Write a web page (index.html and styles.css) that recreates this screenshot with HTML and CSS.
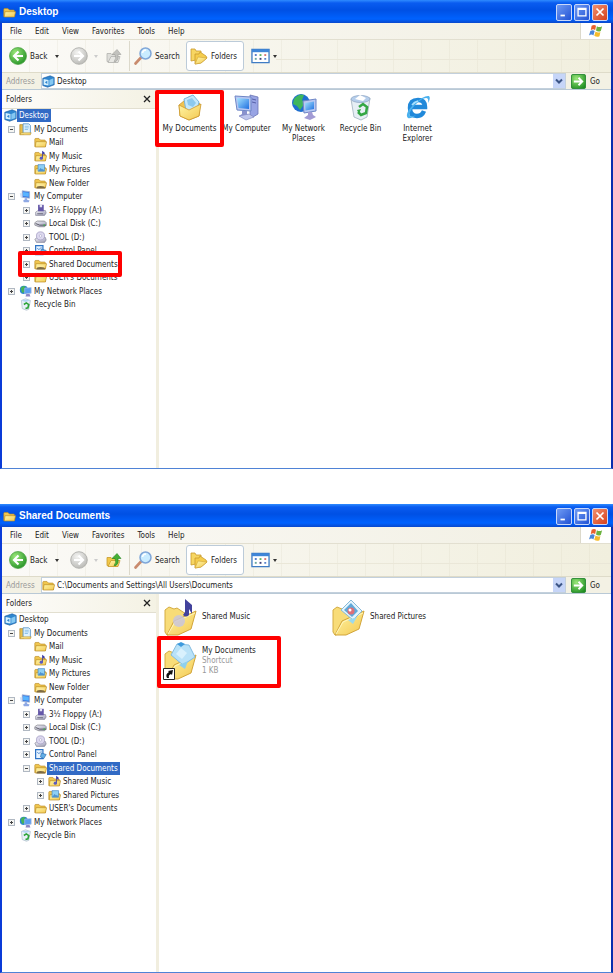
FILE: index.html
```html
<!DOCTYPE html>
<html lang="en">
<head>
    <meta charset="UTF-8">
    <meta name="viewport" content="width=device-width, initial-scale=1.0">
    <title>Shared Documents</title>
    <link rel="stylesheet" href="styles.css">
</head>
<body>
    <!-- Icon set -->
    <svg class="sprite" aria-hidden="true">
        <defs>
            <linearGradient id="gold" x1="0" y1="0" x2="1" y2="1">
                <stop offset="0" stop-color="#fff5a6"/><stop offset="1" stop-color="#f3c850"/>
            </linearGradient>
            <linearGradient id="sky" x1="0" y1="0" x2="1" y2="1">
                <stop offset="0" stop-color="#a6e4ff"/><stop offset="1" stop-color="#1f6fe0"/>
            </linearGradient>
            <linearGradient id="silver" x1="0" y1="0" x2="1" y2="1">
                <stop offset="0" stop-color="#f4f4f8"/><stop offset="1" stop-color="#9a9ab4"/>
            </linearGradient>
            <radialGradient id="leaf" cx=".35" cy=".3" r=".8">
                <stop offset="0" stop-color="#9be77a"/><stop offset="1" stop-color="#1f8f22"/>
            </radialGradient>
            <radialGradient id="mist" cx=".4" cy=".3" r=".8">
                <stop offset="0" stop-color="#f4f4f2"/><stop offset="1" stop-color="#b4b4b0"/>
            </radialGradient>
        </defs>
        <symbol id="folder" viewBox="0 0 16 16">
            <path d="M1 13V4q0-1 1-1h4l2 2h5q1 0 1 1v7z" fill="#f0c64e" stroke="#b98a22" stroke-width=".8"/>
            <path d="M1.500 13.500 2.500 7H15.500L14 13.500z" fill="url(#gold)" stroke="#b98a22" stroke-width=".8"/>
        </symbol>
        <symbol id="folder-music" viewBox="0 0 16 16">
            <use href="#folder"/>
            <path d="M10 10V1l3 2v3l-2-1.500V10z" fill="#3c3ca8"/><circle cx="9" cy="10" r="2" fill="#5a5ac0"/>
        </symbol>
        <symbol id="folder-pictures" viewBox="0 0 16 16">
            <use href="#folder"/>
            <path d="M5 2h8v8H5z" fill="#8fd0f4" stroke="#3f83c4" stroke-width=".8"/><path d="M5 10l3-4 2 2 1-1 2 3z" fill="#4f93cf"/>
        </symbol>
        <symbol id="folder-shared" viewBox="0 0 16 16">
            <use href="#folder"/>
            <path d="M3 14q0-3 5-3t6 3z" fill="#7c6a44"/><path d="M4 10h9" stroke="#fff3b8"/>
        </symbol>
        <symbol id="folder-docs" viewBox="0 0 16 16">
            <path d="M1 2h5v12H1z" fill="#e8bd4b" stroke="#ad8222" stroke-width=".8"/>
            <path d="M5 1h7l2 2v10H5z" fill="#dff3ff" stroke="#4f8ec6"/><path d="M7 4h5M7 6h5M7 8h4" stroke="#7db8e4"/>
            <path d="M1 14.500 3 12H15l-1 2.500z" fill="url(#gold)" stroke="#ad8222" stroke-width=".6"/>
        </symbol>
        <symbol id="desktop" viewBox="0 0 16 16">
            <path d="M1 4 10 1 15 3V12L7 15 1 13z" fill="#2f86cf" stroke="#1d5fa4" stroke-width=".8"/>
            <path d="M2 5l6 1v7l-6-1z" fill="#d5f0ff"/><path d="M3.500 9l3-2v4z" fill="#2f86cf"/><path d="M9 6l5-2v7l-5 2z" fill="#85c8f2"/>
        </symbol>
        <symbol id="pc" viewBox="0 0 16 16">
            <path d="M4 1l9 1v8l-9-1z" fill="#3a74e0" stroke="#9fb0cf"/><path d="M5 2.500l7 .8v5L5 7.500z" fill="#58b4ff"/>
            <path d="M7 10h3v2l3 1-1 2H6l-1-2 2-1z" fill="#8fa9e4"/><path d="M1 4h3v6L2 9z" fill="#cfe0f8"/>
        </symbol>
        <symbol id="floppy" viewBox="0 0 16 16">
            <path d="M2 10 5 8h9l1 3-2 3H2z" fill="url(#silver)" stroke="#77778c" stroke-width=".7"/>
            <path d="M5 1h7v8H5z" fill="#6558a8"/><path d="M7 1h3v3H7z" fill="#e6e6f4"/><path d="M4 12h7" stroke="#55556a"/>
        </symbol>
        <symbol id="disk" viewBox="0 0 16 16">
            <path d="M1 7 4 5h9l2 2v3l-2 2H6L1 10z" fill="url(#silver)" stroke="#77777f" stroke-width=".8"/>
            <path d="M2 8l5 2h8" stroke="#444450" fill="none"/><circle cx="12.500" cy="10" r="1" fill="#3bb54a"/>
        </symbol>
        <symbol id="cd" viewBox="0 0 16 16">
            <path d="M1 10 4 8h10l1 3-2 3H3z" fill="url(#silver)" stroke="#77778c" stroke-width=".7"/>
            <circle cx="8" cy="6" r="5" fill="#dcd8ee" stroke="#9a93bd" stroke-width=".8"/><circle cx="8" cy="6" r="1.500" fill="#fff" stroke="#9a93bd" stroke-width=".6"/>
        </symbol>
        <symbol id="panel" viewBox="0 0 16 16">
            <path d="M2 2h9v11H2z" fill="#e8f4ff" stroke="#2f74c6" stroke-width="1.500"/>
            <path d="M4 5l2 2 3-3" stroke="#2f74c6" fill="none"/><path d="M9 6l6 2-3 5-4-2z" fill="#63aee6" stroke="#1d5fa4" stroke-width=".7"/>
        </symbol>
        <symbol id="network" viewBox="0 0 16 16">
            <circle cx="6" cy="6" r="5" fill="#2a83d4"/><path d="M2 4q3-4 6-2l-2 3 1 3-3 2z" fill="#43b45a"/>
            <path d="M7 4l8-1v7l-8 1z" fill="#5a9df0" stroke="#b4c2de" stroke-width=".8"/><path d="M9 11h4l1 3H8z" fill="#8d86c4"/>
        </symbol>
        <symbol id="bin" viewBox="0 0 16 16">
            <path d="M3 3l5-2 6 2-2 11-3 1-5-2z" fill="#e9f1f8" stroke="#a6b6c8" stroke-width=".8"/><path d="M3 3l5 2 6-2-6-1z" fill="#b3d4f4"/>
            <path d="M6 8l3-2 3 2-1 4-3 1" fill="none" stroke="#2ea43a" stroke-width="2"/>
        </symbol>
        <symbol id="back" viewBox="0 0 18 18">
            <circle cx="9" cy="9" r="8.500" fill="url(#leaf)" stroke="#4aa040" stroke-width=".7"/>
            <path d="M9.500 4.500 5 9l4.500 4.500M5.500 9H14" fill="none" stroke="#fff" stroke-width="2.200"/>
        </symbol>
        <symbol id="forward" viewBox="0 0 18 18">
            <circle cx="9" cy="9" r="8.300" fill="url(#mist)" stroke="#a8a8a4" stroke-width=".8"/>
            <path d="M8.500 4.500 13 9l-4.500 4.500M12.500 9H4" fill="none" stroke="#fff" stroke-width="2.200"/>
        </symbol>
        <symbol id="up-gray" viewBox="0 0 16 16">
            <path d="M1 13V5h4l1 1h4v8z" fill="#dededa" stroke="#b2b2ae" stroke-width=".8"/><path d="M2 14 5 8h9l-2 6z" fill="#e8e8e4" stroke="#b2b2ae" stroke-width=".8"/>
            <path d="M8 13q3-3 1-7H6l5-5 4 5h-3q1 5-2 7z" fill="#c2c2be" stroke="#a0a09c" stroke-width=".6"/>
        </symbol>
        <symbol id="up" viewBox="0 0 16 16">
            <path d="M1 13V5h4l1 1h4v8z" fill="#f2c848" stroke="#c89a2c" stroke-width=".8"/><path d="M2 14 5 8h9l-2 6z" fill="url(#gold)" stroke="#c89a2c" stroke-width=".8"/>
            <path d="M8 13q3-3 1-7H6l5-5 4 5h-3q1 5-2 7z" fill="#45b035" stroke="#24851f" stroke-width=".6"/>
        </symbol>
        <symbol id="search" viewBox="0 0 18 18">
            <path d="M1.500 16.500 7 10.500" stroke="#c98b6e" stroke-width="2.600" stroke-linecap="round"/>
            <circle cx="11.500" cy="6.500" r="5.500" fill="#c9ecff" stroke="#7fa6d8" stroke-width="1.500"/>
            <path d="M8.500 6q.5-3 3.500-3" stroke="#fff" stroke-width="1.500" fill="none"/>
        </symbol>
        <symbol id="folders" viewBox="0 0 18 18">
            <path d="M1 2h4l1 2h5v8l-10 2z" fill="#f7d662" stroke="#c99a2e" stroke-width=".8"/>
            <path d="M5 7h4l1-2 6 4 1 2-6 5-6 1z" fill="#f5cd4c" stroke="#c99a2e" stroke-width=".8"/><path d="M5 17 8 10l9 1-6 5z" fill="url(#gold)" stroke="#c99a2e" stroke-width=".5"/>
        </symbol>
        <symbol id="views" viewBox="0 0 20 16">
            <path d="M1 1h18v14H1z" fill="#fff" stroke="#3f7cc4" stroke-width="1.400"/><path d="M1 1h18v3H1z" fill="#3f86d8"/>
            <path d="M4 6h2v2H4zM14 10h2v2h-2z" fill="#5a82cc"/><path d="M9 6h2v2H9z" fill="#61b567"/><path d="M14 6h2v2h-2z" fill="#d77676"/><path d="M4 10h2v2H4z" fill="#6aa7a0"/><path d="M9 10h2v2H9z" fill="#42427a"/>
        </symbol>
        <symbol id="go" viewBox="0 0 16 16">
            <rect x=".5" y=".5" width="15" height="15" rx="1.500" fill="url(#leaf)" stroke="#2b8a35"/>
            <path d="M3 8h9M8 4l4 4-4 4" fill="none" stroke="#fff" stroke-width="2"/>
        </symbol>
        <symbol id="flag" viewBox="0 0 16 16">
            <path d="M3 2q3-2 5 0L7 7Q5 5 2 7z" fill="#e8602c"/><path d="M9 2.500q3 2 6 0L13.500 8q-3 1.500-5.500-.5z" fill="#6cb33f"/>
            <path d="M1.500 8q3-2 5 0L5 13q-2-2-5 0z" fill="#4a86d8"/><path d="M7.500 8.500q3 2 5.500.5L12 14q-3 1.500-6-.5z" fill="#f5bb2b"/>
        </symbol>
        <symbol id="big-docs" viewBox="0 0 28 28">
            <path d="M3 12 14 3l10 8-1 12-10 4-9-4z" fill="#f1c44f" stroke="#cb982f" stroke-width=".8"/>
            <path d="M8 6l9-4 6 7-2 8-11 1z" fill="#c4e8fb" stroke="#78b5dc"/><path d="M11 7l5-2 4 5-3 4-5-2z" fill="#8cc9ee"/>
            <path d="M3 12l10 5 12-6-2 12-10 4-9-4z" fill="url(#gold)" stroke="#cb982f" stroke-width=".8"/>
        </symbol>
        <symbol id="big-pc" viewBox="0 0 28 28">
            <path d="M17 2l8 2v17l-5 3-3-2z" fill="#98a4e4" stroke="#6a74b4" stroke-width=".8"/><path d="M19 6l4 1M19 9l4 1" stroke="#5661a8"/>
            <path d="M2 3l16 1v14L4 17z" fill="#b8c8f2" stroke="#6e86c6"/><path d="M4 5l12 1v10L5.500 15z" fill="url(#sky)"/>
            <path d="M9 18h5v3l4 2-5 3-7-3 3-2z" fill="#8a92cd"/><path d="M6 23l10-2 5 3-8 3z" fill="#bfc6ec" stroke="#7a83c0" stroke-width=".6"/>
        </symbol>
        <symbol id="big-network" viewBox="0 0 28 28">
            <circle cx="11" cy="10" r="9" fill="#1f6fd0"/><path d="M4 6q5-6 10-4l-2 5 3 3-5 7-3-4-4-2z" fill="#3fb65c"/>
            <path d="M13 8l13-2v12l-12 2z" fill="#b8c8f2" stroke="#6e86c6"/><path d="M15 10l9-1.500V16l-8.500 1.500z" fill="url(#sky)"/>
            <path d="M18 19h4l1 3 3 2-6 3-6-2 4-3z" fill="#a29bd4"/>
        </symbol>
        <symbol id="big-bin" viewBox="0 0 28 28">
            <path d="M4 6l19-1-3 19-6 3-7-3z" fill="#e6eff5" stroke="#b0bfca"/><ellipse cx="13.500" cy="6" rx="9.500" ry="3.500" fill="#b4cdeb" stroke="#93a9c6" stroke-width=".8"/>
            <path d="M8 6l5-4 6 3-3 3z" fill="#fff"/><path d="M12 14l4-3 4 3-1 6-5 2-3-3" fill="none" stroke="#33a744" stroke-width="2.500"/><path d="M10 17l4-1-2 5z" fill="#33a744"/>
        </symbol>
        <symbol id="big-ie" viewBox="0 0 28 28">
            <path d="M20 18q-2 5-7 5-7 0-7-8t8-8q7 0 7 7H8" fill="none" stroke="#2189da" stroke-width="4.500"/>
            <path d="M4 25Q0 21 10 11 20 2 25 3q2 2-1 7 1-5-2-5-4 0-11 7Q4 20 6 23q2 1 6-1-5 4-8 3z" fill="#4bb1ee"/>
            <path d="M8 12q2-3 6-4" stroke="#a6e0ff" stroke-width="1.500" fill="none"/>
        </symbol>
        <symbol id="tile-folder" viewBox="0 0 34 38">
            <path d="M2 12 6 9l5 2 3-1 9 6v17L4 37 2 34z" fill="#f8dc78" stroke="#d4ac42"/>
            <path d="M4 37 11 23l11-5 11-5-5 18-13 6z" fill="url(#gold)" stroke="#d2a53a"/>
            <path d="M5 36 12 24l20-9" fill="none" stroke="#fff6bd"/>
        </symbol>
        <symbol id="tile-music" viewBox="0 0 34 38">
            <use href="#tile-folder"/>
            <circle cx="16" cy="23" r="6" fill="#c9c6dc" opacity=".85"/>
            <path d="M22 1l7 6v9l-3-5v6q-3 3-6 0l2-3z" fill="#42429c"/>
        </symbol>
        <symbol id="tile-pictures" viewBox="0 0 34 38">
            <use href="#tile-folder"/>
            <path d="M10 12 20 2l11 11-9 9z" fill="#e4f4fc" stroke="#86b9d8"/><path d="M13 12l7-7 7 8-6 6z" fill="#5fa8d8"/><circle cx="20" cy="13" r="3.500" fill="#dd6f78"/><circle cx="19" cy="12" r="1.500" fill="#fff"/>
            <path d="M17 22l9-3-4 7z" fill="#9ad9ee"/>
        </symbol>
        <symbol id="tile-docs" viewBox="0 0 34 38">
            <use href="#tile-folder"/>
            <path d="M8 13 14 2l12 1 6 12-12 8z" fill="#b9e2f8" stroke="#84bce0"/><path d="M14 2l4-2 4 2-4 3z" fill="#3e9add"/>
            <path d="M13 12l5-6 6 5-5 6z" fill="#d9f1fd"/><path d="M16 23l9-4-3 8z" fill="#8fd0ec"/>
            <path d="M.5 26.500h11v11H.5z" fill="#fff" stroke="#222"/><path d="M4 36q-2-4 2-6l-1-1 5-1-1 5-1-1q-3 1-2 4z" fill="#111"/>
        </symbol>
    </svg>

    <!-- Desktop window -->
    <section class="window">
        <header class="title-bar">
            <svg class="icon-small"><use href="#folder"/></svg>
            <h1>Desktop</h1>
            <div class="window-buttons">
                <button class="win-btn" aria-label="Minimize"><svg viewBox="0 0 16 16"><path d="M4 11h5v2H4z" fill="#fff"/></svg></button>
                <button class="win-btn" aria-label="Maximize"><svg viewBox="0 0 16 16"><path d="M3.500 4h9v8.500h-9zM3 5h10" fill="none" stroke="#fff" stroke-width="1.500"/></svg></button>
                <button class="win-btn win-close" aria-label="Close"><svg viewBox="0 0 16 16"><path d="M4 4l8 8M12 4l-8 8" stroke="#fff" stroke-width="2"/></svg></button>
            </div>
        </header>
        <nav class="menu-bar">
            <button>File</button><button>Edit</button><button>View</button><button>Favorites</button><button>Tools</button><button>Help</button>
            <div class="brand"><svg class="icon-flag"><use href="#flag"/></svg></div>
        </nav>
        <div class="toolbar">
            <button class="tool tool-back"><svg class="icon-tool"><use href="#back"/></svg>Back<i class="caret"></i></button>
            <button class="tool tool-forward" aria-label="Forward" disabled><svg class="icon-tool"><use href="#forward"/></svg><i class="caret"></i></button>
            <button class="tool tool-up" aria-label="Up" disabled><svg class="icon-up"><use href="#up-gray"/></svg></button>
            <button class="tool tool-search"><svg class="icon-tool"><use href="#search"/></svg>Search</button>
            <button class="tool tool-folders"><svg class="icon-tool"><use href="#folders"/></svg>Folders</button>
            <button class="tool tool-views" aria-label="Views"><svg class="icon-views"><use href="#views"/></svg><i class="caret"></i></button>
        </div>
        <div class="address-bar">
            <label for="address1">Address</label>
            <div class="address-box">
                <svg class="icon-small"><use href="#desktop"/></svg>
                <input id="address1" type="text" value="Desktop">
                <button class="drop" aria-label="Show addresses"><svg viewBox="0 0 12 14"><path d="M3 5.500l3 3 3-3" fill="none" stroke="#3c5586" stroke-width="2"/></svg></button>
            </div>
            <button class="go"><svg class="icon-go"><use href="#go"/></svg>Go</button>
        </div>
        <div class="explorer">
            <aside class="folder-pane">
                <div class="pane-header"><h2>Folders</h2><button class="pane-close" aria-label="Close folders"><svg viewBox="0 0 8 8"><path d="M1 1l6 6M7 1L1 7" stroke="#222" stroke-width="1.300"/></svg></button></div>
                <ul class="tree">
                    <li class="root"><svg class="icon-small"><use href="#desktop"/></svg><a class="selected" href="#">Desktop</a></li>
                    <li><button class="toggle open" aria-label="Collapse"></button><svg class="icon-small"><use href="#folder-docs"/></svg><a href="#">My Documents</a></li>
                    <li class="level-2"><span class="no-toggle"></span><svg class="icon-small"><use href="#folder"/></svg><a href="#">Mail</a></li>
                    <li class="level-2"><span class="no-toggle"></span><svg class="icon-small"><use href="#folder-music"/></svg><a href="#">My Music</a></li>
                    <li class="level-2"><span class="no-toggle"></span><svg class="icon-small"><use href="#folder-pictures"/></svg><a href="#">My Pictures</a></li>
                    <li class="level-2"><span class="no-toggle"></span><svg class="icon-small"><use href="#folder-shared"/></svg><a href="#">New Folder</a></li>
                    <li><button class="toggle open" aria-label="Collapse"></button><svg class="icon-small"><use href="#pc"/></svg><a href="#">My Computer</a></li>
                    <li class="level-2"><button class="toggle" aria-label="Expand"></button><svg class="icon-small"><use href="#floppy"/></svg><a href="#">3½ Floppy (A:)</a></li>
                    <li class="level-2"><button class="toggle" aria-label="Expand"></button><svg class="icon-small"><use href="#disk"/></svg><a href="#">Local Disk (C:)</a></li>
                    <li class="level-2"><button class="toggle" aria-label="Expand"></button><svg class="icon-small"><use href="#cd"/></svg><a href="#">TOOL (D:)</a></li>
                    <li class="level-2"><button class="toggle" aria-label="Expand"></button><svg class="icon-small"><use href="#panel"/></svg><a href="#">Control Panel</a></li>
                    <li class="level-2"><button class="toggle" aria-label="Expand"></button><svg class="icon-small"><use href="#folder-shared"/></svg><a href="#">Shared Documents</a><span class="marker marker-row"></span></li>
                    <li class="level-2"><button class="toggle" aria-label="Expand"></button><svg class="icon-small"><use href="#folder"/></svg><a href="#">USER's Documents</a></li>
                    <li><button class="toggle" aria-label="Expand"></button><svg class="icon-small"><use href="#network"/></svg><a href="#">My Network Places</a></li>
                    <li><span class="no-toggle"></span><svg class="icon-small"><use href="#bin"/></svg><a href="#">Recycle Bin</a></li>
                </ul>
            </aside>
            <main class="content icons">
                <a class="desk-icon" href="#"><svg><use href="#big-docs"/></svg><span>My Documents</span><span class="marker marker-icon"></span></a>
                <a class="desk-icon" href="#"><svg><use href="#big-pc"/></svg><span>My Computer</span></a>
                <a class="desk-icon" href="#"><svg><use href="#big-network"/></svg><span>My Network<br>Places</span></a>
                <a class="desk-icon" href="#"><svg><use href="#big-bin"/></svg><span>Recycle Bin</span></a>
                <a class="desk-icon" href="#"><svg><use href="#big-ie"/></svg><span>Internet<br>Explorer</span></a>
            </main>
        </div>
    </section>

    <!-- Shared Documents window -->
    <section class="window">
        <header class="title-bar">
            <svg class="icon-small"><use href="#folder"/></svg>
            <h1>Shared Documents</h1>
            <div class="window-buttons">
                <button class="win-btn" aria-label="Minimize"><svg viewBox="0 0 16 16"><path d="M4 11h5v2H4z" fill="#fff"/></svg></button>
                <button class="win-btn" aria-label="Maximize"><svg viewBox="0 0 16 16"><path d="M3.500 4h9v8.500h-9zM3 5h10" fill="none" stroke="#fff" stroke-width="1.500"/></svg></button>
                <button class="win-btn win-close" aria-label="Close"><svg viewBox="0 0 16 16"><path d="M4 4l8 8M12 4l-8 8" stroke="#fff" stroke-width="2"/></svg></button>
            </div>
        </header>
        <nav class="menu-bar">
            <button>File</button><button>Edit</button><button>View</button><button>Favorites</button><button>Tools</button><button>Help</button>
            <div class="brand"><svg class="icon-flag"><use href="#flag"/></svg></div>
        </nav>
        <div class="toolbar">
            <button class="tool tool-back"><svg class="icon-tool"><use href="#back"/></svg>Back<i class="caret"></i></button>
            <button class="tool tool-forward" aria-label="Forward" disabled><svg class="icon-tool"><use href="#forward"/></svg><i class="caret"></i></button>
            <button class="tool tool-up" aria-label="Up"><svg class="icon-up"><use href="#up"/></svg></button>
            <button class="tool tool-search"><svg class="icon-tool"><use href="#search"/></svg>Search</button>
            <button class="tool tool-folders"><svg class="icon-tool"><use href="#folders"/></svg>Folders</button>
            <button class="tool tool-views" aria-label="Views"><svg class="icon-views"><use href="#views"/></svg><i class="caret"></i></button>
        </div>
        <div class="address-bar">
            <label for="address2">Address</label>
            <div class="address-box">
                <svg class="icon-small"><use href="#folder"/></svg>
                <input id="address2" type="text" value="C:\Documents and Settings\All Users\Documents">
                <button class="drop" aria-label="Show addresses"><svg viewBox="0 0 12 14"><path d="M3 5.500l3 3 3-3" fill="none" stroke="#3c5586" stroke-width="2"/></svg></button>
            </div>
            <button class="go"><svg class="icon-go"><use href="#go"/></svg>Go</button>
        </div>
        <div class="explorer">
            <aside class="folder-pane">
                <div class="pane-header"><h2>Folders</h2><button class="pane-close" aria-label="Close folders"><svg viewBox="0 0 8 8"><path d="M1 1l6 6M7 1L1 7" stroke="#222" stroke-width="1.300"/></svg></button></div>
                <ul class="tree">
                    <li class="root"><svg class="icon-small"><use href="#desktop"/></svg><a href="#">Desktop</a></li>
                    <li><button class="toggle open" aria-label="Collapse"></button><svg class="icon-small"><use href="#folder-docs"/></svg><a href="#">My Documents</a></li>
                    <li class="level-2"><span class="no-toggle"></span><svg class="icon-small"><use href="#folder"/></svg><a href="#">Mail</a></li>
                    <li class="level-2"><span class="no-toggle"></span><svg class="icon-small"><use href="#folder-music"/></svg><a href="#">My Music</a></li>
                    <li class="level-2"><span class="no-toggle"></span><svg class="icon-small"><use href="#folder-pictures"/></svg><a href="#">My Pictures</a></li>
                    <li class="level-2"><span class="no-toggle"></span><svg class="icon-small"><use href="#folder-shared"/></svg><a href="#">New Folder</a></li>
                    <li><button class="toggle open" aria-label="Collapse"></button><svg class="icon-small"><use href="#pc"/></svg><a href="#">My Computer</a></li>
                    <li class="level-2"><button class="toggle" aria-label="Expand"></button><svg class="icon-small"><use href="#floppy"/></svg><a href="#">3½ Floppy (A:)</a></li>
                    <li class="level-2"><button class="toggle" aria-label="Expand"></button><svg class="icon-small"><use href="#disk"/></svg><a href="#">Local Disk (C:)</a></li>
                    <li class="level-2"><button class="toggle" aria-label="Expand"></button><svg class="icon-small"><use href="#cd"/></svg><a href="#">TOOL (D:)</a></li>
                    <li class="level-2"><button class="toggle" aria-label="Expand"></button><svg class="icon-small"><use href="#panel"/></svg><a href="#">Control Panel</a></li>
                    <li class="level-2"><button class="toggle open" aria-label="Collapse"></button><svg class="icon-small"><use href="#folder-shared"/></svg><a class="selected" href="#">Shared Documents</a></li>
                    <li class="level-3"><button class="toggle" aria-label="Expand"></button><svg class="icon-small"><use href="#folder-music"/></svg><a href="#">Shared Music</a></li>
                    <li class="level-3"><button class="toggle" aria-label="Expand"></button><svg class="icon-small"><use href="#folder-pictures"/></svg><a href="#">Shared Pictures</a></li>
                    <li class="level-2"><button class="toggle" aria-label="Expand"></button><svg class="icon-small"><use href="#folder"/></svg><a href="#">USER's Documents</a></li>
                    <li><button class="toggle" aria-label="Expand"></button><svg class="icon-small"><use href="#network"/></svg><a href="#">My Network Places</a></li>
                    <li><span class="no-toggle"></span><svg class="icon-small"><use href="#bin"/></svg><a href="#">Recycle Bin</a></li>
                </ul>
            </aside>
            <main class="content tiles">
                <a class="tile" href="#"><svg><use href="#tile-music"/></svg><span>Shared Music</span></a>
                <a class="tile" href="#"><svg><use href="#tile-pictures"/></svg><span>Shared Pictures</span></a>
                <a class="tile" href="#"><svg><use href="#tile-docs"/></svg><span>My Documents<small>Shortcut</small><small>1 KB</small></span><span class="marker marker-tile"></span></a>
            </main>
        </div>
    </section>
</body>
</html>
```

FILE: styles.css
```css
* {
    box-sizing: border-box;
}

body {
    font-family: "DejaVu Sans Condensed", "Liberation Sans", Arial, sans-serif;
    font-size: 8px;
    color: #222;
    background-color: #fff;
    margin: 0;
    min-height: 100vh;
    display: grid;
    grid-auto-rows: 1fr;
    gap: 35px;
}

button, input {
    font: inherit;
    color: inherit;
    background: none;
    border: none;
    padding: 0;
    margin: 0;
}

a {
    color: inherit;
    text-decoration: none;
}

svg {
    display: block;
    flex: none;
}

.sprite {
    position: absolute;
    width: 0;
    height: 0;
}

.window {
    display: flex;
    flex-direction: column;
    background-color: #fff;
    border: 2px solid #0a3bd8;
    border-top: none;
    border-right-color: #0a2fae;
    border-bottom: 1px solid #4f83d6;
}

/* Title bar */
.title-bar {
    height: 23px;
    display: flex;
    align-items: center;
    gap: 3px;
    margin: 0 -2px;
    padding: 1px 5px 0 3px;
    background: linear-gradient(#2f8bff 0, #0a5cf0 3px, #0050e4 10px, #0062ff 19px, #0a48cc 23px);
}

.title-bar h1 {
    flex: 1;
    margin: 0;
    font-family: "Liberation Sans", Arial, sans-serif;
    font-size: 10px;
    line-height: 12px;
    color: #fff;
}

.window-buttons {
    display: flex;
    gap: 2px;
}

.win-btn {
    width: 16px;
    height: 17px;
    border: 1px solid #c9d8fa;
    border-radius: 2px;
    background: linear-gradient(135deg, #6f9bf4, #2252d4);
}

.win-close {
    background: linear-gradient(135deg, #f2906e, #d6401c);
}

/* Menu bar */
.menu-bar {
    height: 17px;
    display: flex;
    align-items: center;
    gap: 13px;
    padding-left: 8px;
    background: linear-gradient(90deg, #fbfaf7, #f1efe2);
    border-bottom: 1px solid #e2dfd0;
}

.brand {
    align-self: stretch;
    width: 31px;
    margin-left: auto;
    display: flex;
    align-items: center;
    justify-content: center;
    background-color: #fff;
    border-left: 1px solid #dcd9cb;
}

/* Toolbar */
.toolbar {
    height: 33px;
    display: flex;
    align-items: center;
    padding-left: 7px;
    background:
        linear-gradient(#eae7d8, #eae7d8) right 19px / 55% 1px no-repeat,
        repeating-linear-gradient(90deg, transparent 0 27px, rgba(200, 195, 170, .15) 27px 28px),
        linear-gradient(90deg, #fbfaf7, #f1efde);
    border-bottom: 1px solid #dedbc9;
}

.tool {
    height: 30px;
    display: flex;
    align-items: center;
    gap: 3px;
}

.caret {
    border: 2px solid transparent;
    border-top: 3px solid #333;
    border-bottom: none;
}

.tool-back {
    width: 61px;
}

.tool-back .caret {
    margin-left: 5px;
}

.tool-forward {
    width: 36px;
    gap: 6px;
}

.tool-forward .caret {
    border-top-color: #ccc;
}

.tool-up {
    width: 23px;
}

.tool-search {
    width: 57px;
    padding-left: 4px;
    border-left: 1px solid #dcd9cb;
}

.tool-folders {
    width: 58px;
    padding-left: 3px;
    background-color: #fff;
    border: 1px solid #bccbd9;
    border-radius: 3px;
}

.tool-views {
    padding-left: 7px;
}

.icon-small {
    width: 13px;
    height: 13px;
}

.icon-flag {
    width: 14px;
    height: 14px;
}

.icon-tool {
    width: 18px;
    height: 18px;
}

.icon-up {
    width: 16px;
    height: 17px;
}

.icon-views {
    width: 19px;
    height: 16px;
}

.icon-go {
    width: 15px;
    height: 15px;
}

/* Address bar */
.address-bar {
    height: 17px;
    display: flex;
    align-items: center;
    padding-left: 4px;
    background-color: #f3f1e4;
    border-bottom: 1px solid #b9c9d6;
}

.address-bar label {
    width: 35px;
    color: #999;
}

.address-box {
    flex: 1;
    height: 16px;
    display: flex;
    align-items: center;
    background-color: #fff;
    border: 1px solid #c3d0dc;
}

.address-box input {
    flex: 1;
    min-width: 0;
    height: 14px;
    padding-left: 2px;
    outline: none;
}

.drop {
    width: 12px;
    height: 14px;
    background-color: #c6d5f8;
}

.go {
    width: 45px;
    display: flex;
    align-items: center;
    gap: 4px;
    padding-left: 5px;
}

/* Folder pane */
.explorer {
    flex: 1;
    display: flex;
}

.folder-pane {
    width: 157px;
    border-right: 3px solid #f1eedf;
}

.pane-header {
    height: 19px;
    display: flex;
    align-items: center;
    justify-content: space-between;
    padding: 0 5px 0 4px;
    background: linear-gradient(90deg, #fdfcfa, #f4f2e4);
    border-bottom: 1px solid #e2dfd0;
}

.pane-header h2 {
    margin: 0;
    font-size: 8px;
    font-weight: normal;
}

.pane-close {
    width: 8px;
    height: 12px;
}

.pane-close svg {
    width: 8px;
    height: 8px;
}

.tree {
    list-style: none;
    margin: 0;
    padding: 0;
}

.tree li {
    position: relative;
    height: 13px;
    display: flex;
    align-items: center;
    padding-left: 6px;
    white-space: nowrap;
}

.tree li:nth-child(even) {
    height: 14px;
}

.tree li.root {
    padding-left: 2px;
}

.tree li.level-2 {
    padding-left: 21px;
}

.tree li.level-3 {
    padding-left: 35px;
}

.tree a {
    padding: 0 2px;
    line-height: 13px;
}

.tree a.selected {
    color: #fff;
    background-color: #316ac5;
}

.toggle, .no-toggle {
    flex: none;
    width: 7px;
    height: 7px;
    margin-right: 4px;
}

.toggle {
    border: 1px solid #b0b8c2;
    background:
        linear-gradient(#444, #444) center / 3px 1px no-repeat,
        linear-gradient(#444, #444) center / 1px 3px no-repeat,
        #f5f5f2;
}

.toggle.open {
    background: linear-gradient(#444, #444) center / 3px 1px no-repeat, #f5f5f2;
}

/* Content area */
.content {
    flex: 1;
}

.icons {
    display: flex;
    align-items: flex-start;
    padding: 3px 0 0 2px;
}

.desk-icon {
    position: relative;
    width: 57px;
    display: flex;
    flex-direction: column;
    align-items: center;
    gap: 3px;
    text-align: center;
    line-height: 10px;
    white-space: nowrap;
}

.desk-icon svg {
    width: 28px;
    height: 28px;
}

.tiles {
    display: grid;
    grid-template-columns: repeat(auto-fill, 168px);
    align-content: start;
    gap: 6px 0;
    padding: 4px 0 0 4px;
}

.tile {
    position: relative;
    display: flex;
    align-items: center;
    gap: 5px;
    line-height: 10px;
}

.tile svg {
    width: 34px;
    height: 38px;
}

.tile small {
    display: block;
    font-size: 8px;
    color: #999;
}

/* Red frames round the folders to pick */
.marker {
    position: absolute;
    z-index: 1;
    border: 4px solid #f00;
    border-radius: 2px;
    pointer-events: none;
}

.marker-icon {
    inset: -3px -6px auto;
    height: 57px;
}

.marker-row {
    left: 16px;
    top: -6px;
    width: 104px;
    height: 26px;
}

.marker-tile {
    left: -6px;
    top: -6px;
    width: 124px;
    height: 52px;
}
```
